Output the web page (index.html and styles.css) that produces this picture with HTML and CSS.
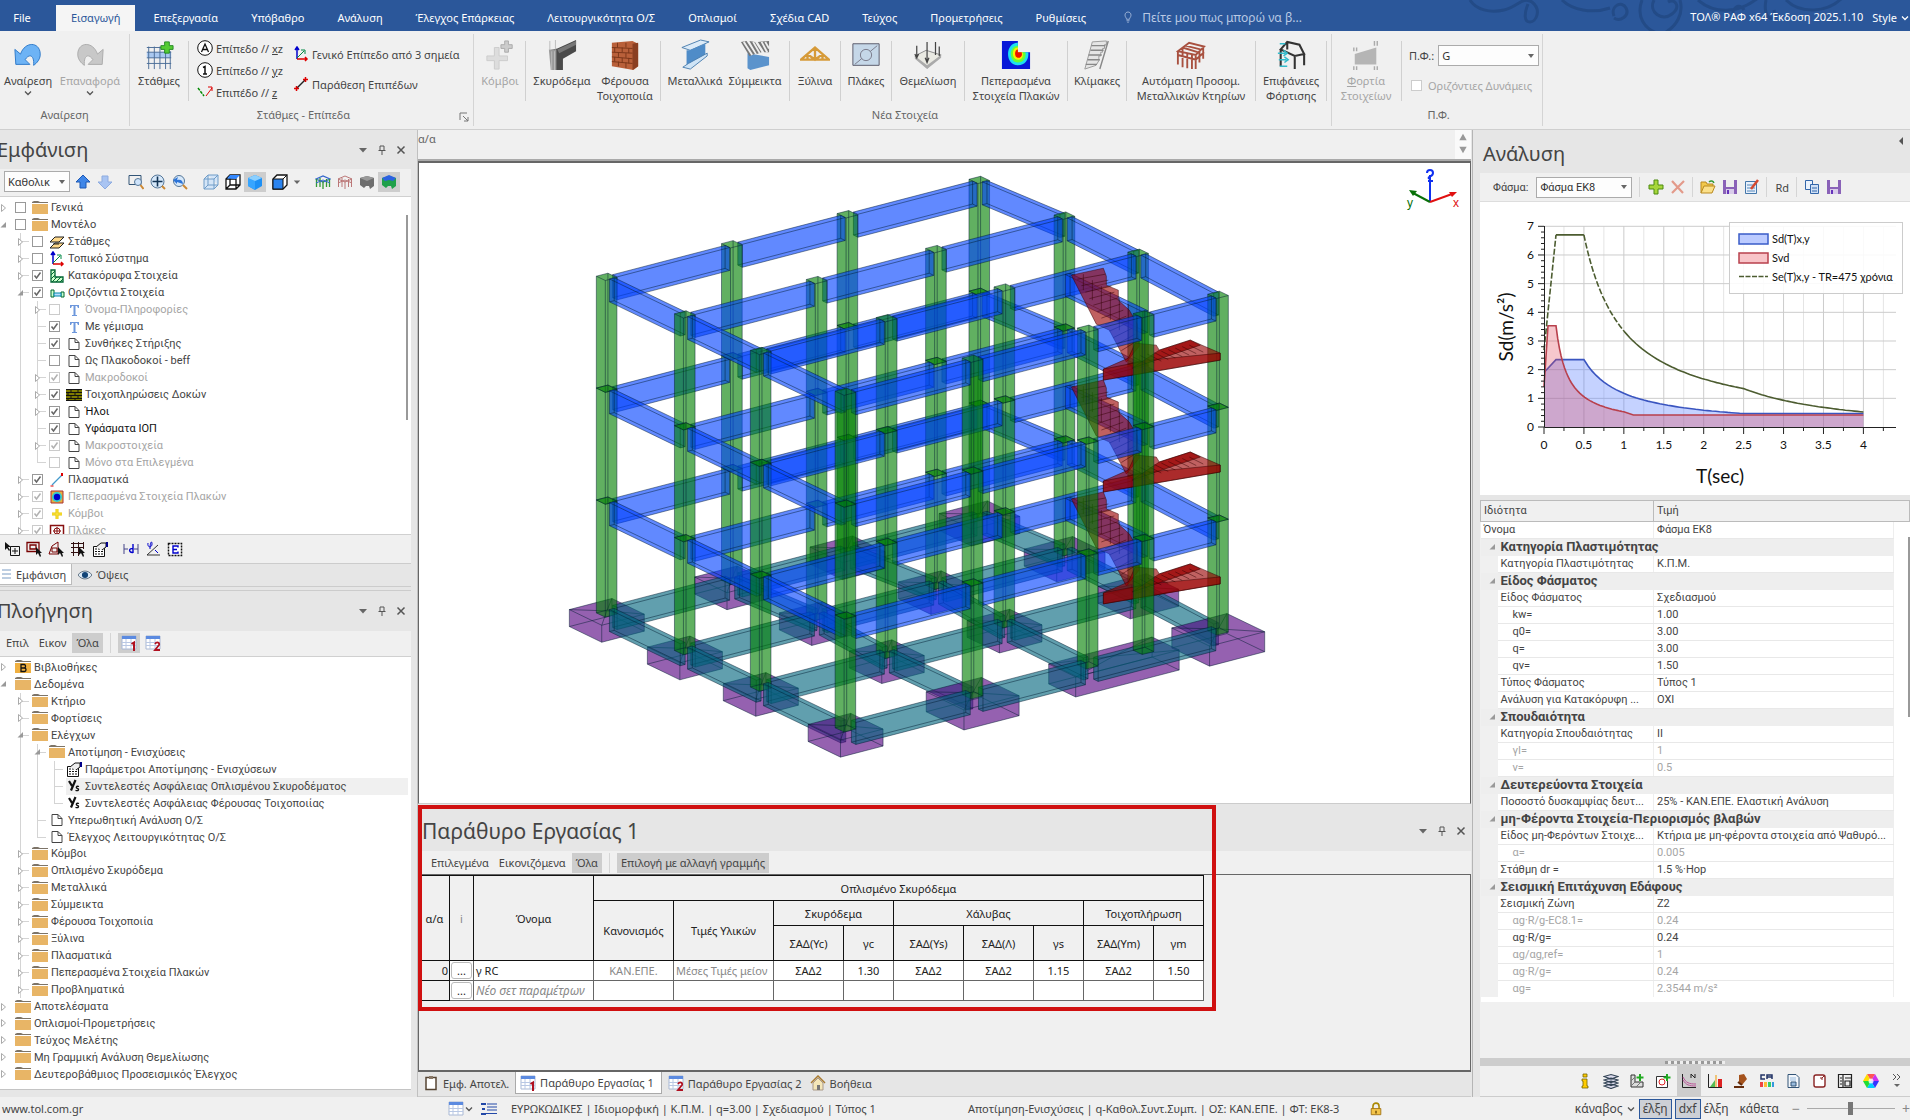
FILE: index.html
```html
<!DOCTYPE html>
<html lang="el">
<head>
<meta charset="utf-8">
<title>ΤΟΛ® ΡΑΦ</title>
<link rel="stylesheet" href="styles.css">
</head>
<body>
<svg class="defs" aria-hidden="true">
  <symbol id="folder" viewBox="0 0 16 16"><path d="M0 3V2l2-1h4l2 1h8v1z" fill="#7d7468"/><path d="M0 4h16v10H0z" fill="#e8b566"/></symbol>
  <symbol id="folderb" viewBox="0 0 16 16"><path d="M0 3V2l2-1h4l2 1h8v1z" fill="#7d7468"/><path d="M0 4h16v10H0z" fill="#f0b040"/><path d="M6 5.500v7h3.500c2 0 2-3.500 0-3.500H6h3.200c1.800 0 1.800-3.500 0-3.500z" fill="none" stroke="#111" stroke-width="1.300"/></symbol>
  <symbol id="doc" viewBox="0 0 16 16"><path d="M3 2.500h6l4 4v7H3zM9 2.500v4h4" fill="#fff" stroke="#444"/></symbol>
  <symbol id="levels" viewBox="0 0 16 16"><path d="M1 14l5-5h9l-5 5zM1 8l5-5h9l-5 5z" fill="#ffd98a" stroke="#222"/><path d="M4 10h6" stroke="#222"/></symbol>
  <symbol id="axes" viewBox="0 0 16 16"><path d="M4 13V2M2 4l2-3 2 3" stroke="#00c" fill="none" stroke-width="1.500"/><path d="M4 13h10M12 11l2 2-2 2" stroke="#d00" fill="none" stroke-width="1.500"/><path d="M4 12l7-7M8 4h4v4" stroke="#084" fill="none"/></symbol>
  <symbol id="lshape" viewBox="0 0 16 16"><path d="M2 2h4v7h8v5H2z" fill="#cfc" stroke="#063" stroke-width="1.300"/><path d="M2 7l4-4M2 11l4-4M3 14l5-5M7 14l5-5M11 14l3-3" stroke="#063"/></symbol>
  <symbol id="beam" viewBox="0 0 16 16"><path d="M2 5h3v7H2zM12 7h3v5h-3z" fill="#cfc" stroke="#063"/><path d="M5 8h7v3H5z" fill="#bdf" stroke="#08a"/></symbol>
  <symbol id="tt" viewBox="0 0 16 16"><path d="M4 3h9v3h-1l-1-2h-1.500v9H11v1H6v-1h1.500V4H6L5 6H4z" fill="#6d97dc"/></symbol>
  <symbol id="bricks" viewBox="0 0 16 16"><path d="M0 2h16v12H0z" fill="#7d7a00"/><path d="M0 2.500h16M0 5.500h16M0 8.500h16M0 11.500h16M0 13.500h16M5 2v3M12 2v3M2 5v3M9 5v3M5 8v3M12 8v3M2 11v3M9 11v3" stroke="#111"/></symbol>
  <symbol id="line" viewBox="0 0 16 16"><path d="M3 13L13 3" stroke="#49c" stroke-width="1.300"/><path d="M1.500 13.500h3v1h-3zM12 1h2v3h-2z" fill="#d00"/></symbol>
  <symbol id="fem" viewBox="0 0 16 16"><path d="M2 2h12v12H2z" fill="#e8b040" stroke="#a33"/><circle cx="8" cy="8" r="5" fill="#3cc"/><circle cx="8" cy="8" r="3.200" fill="#00c"/></symbol>
  <symbol id="node" viewBox="0 0 16 16"><path d="M8 3v10M3 8h10" stroke="#e8c800" stroke-width="3"/><path d="M8 3v10M3 8h10" stroke="#ffe650"/></symbol>
  <symbol id="slab" viewBox="0 0 16 16"><path d="M1.500 2.500h13v12h-13z" fill="#fff" stroke="#811" stroke-width="1.500"/><circle cx="8" cy="8" r="3" fill="none" stroke="#811"/><path d="M8 4v8M4 8h8" stroke="#811"/></symbol>
  <symbol id="params" viewBox="0 0 16 16"><path d="M1.500 5.500h11v10h-11z" fill="#fff" stroke="#111"/><path d="M3 8h8M3 10.500h8M3 13h8" stroke="#111" stroke-dasharray="2 1"/><path d="M4 6l5-4h5v4l-4 3" fill="#eee" stroke="#111"/><path d="M14 1h2v5h-2z" fill="#008"/></symbol>
  <symbol id="ys" viewBox="0 0 16 16"><path d="M3 3l3 5M9.500 2L5 12.500" stroke="#111" stroke-width="2.200" fill="none"/><path d="M13 8.500c-3-1-3.500 1.500-1.500 2s1 3-2 1.800" stroke="#111" stroke-width="1.300" fill="none"/></symbol>
  <symbol id="up" viewBox="0 0 16 16"><path d="M8 1l7 7h-4v6H5V8H1z" fill="#3f86e8" stroke="#1d58b5"/></symbol>
  <symbol id="down" viewBox="0 0 16 16"><path d="M8 15L1 8h4V2h6v6h4z" fill="#a9c4f2" stroke="#8dabe0"/></symbol>
  <symbol id="zwin" viewBox="0 0 16 16"><path d="M1 1.500h12v9H1z" fill="none" stroke="#357"/><circle cx="10" cy="8" r="3.500" fill="#cfe4fb" stroke="#579"/><path d="M12.500 11l3 4" stroke="#c83" stroke-width="2"/></symbol>
  <symbol id="zpan" viewBox="0 0 16 16"><circle cx="7.500" cy="7.500" r="6.500" fill="#d6e8fa" stroke="#579"/><path d="M7.500 2.500v10M2.500 7.500h10" stroke="#135" stroke-width="1.600"/><path d="M12 12l3 3" stroke="#c83" stroke-width="2"/></symbol>
  <symbol id="zprev" viewBox="0 0 16 16"><circle cx="7" cy="7" r="5.500" fill="#d6e8fa" stroke="#579"/><path d="M11 10c0-4-3-5-6-4l1-3-5 3 4 4v-2" fill="#2d74d8"/><path d="M11 11l4 4" stroke="#c83" stroke-width="2"/></symbol>
  <symbol id="cube1" viewBox="0 0 16 16"><path d="M1 5l4-4h10v10l-4 4H1zM1 5h10v10M11 5l4-4M5 1v10h10M1 15l4-4" fill="#d4e5f7" stroke="#6f9cc8"/></symbol>
  <symbol id="cube2" viewBox="0 0 16 16"><path d="M1 5l4-4h10v10l-4 4H1zM1 5h10v10M5 1v10h10M1 15l4-4" fill="#fff" stroke="#111" stroke-width="1.300"/><path d="M2 4.500L5 1h10l-4 4z" fill="#38f"/></symbol>
  <symbol id="cube3" viewBox="0 0 16 16"><path d="M1 4l7-3 7 3v8l-7 4-7-4z" fill="#1e90f5"/><path d="M1 4l7 3v9l-7-4z" fill="#37a5ff"/><path d="M1 4l7-3 7 3-7 3z" fill="#8cd0ff"/></symbol>
  <symbol id="cube4" viewBox="0 0 16 16"><path d="M1 5l4-4h10v10l-4 4H1z" fill="#fff" stroke="#111" stroke-width="1.300"/><path d="M1 5h10v10H1z" fill="#2b84f0" stroke="#111"/><path d="M11 5l4-4" stroke="#111"/></symbol>
  <symbol id="frame1" viewBox="0 0 16 16"><path d="M1 5l7-3 7 3-7 3z" fill="none" stroke="#36c" stroke-width="1.300"/><path d="M1.500 5v8M5 4v9M8 7v8M11.500 5v8M14.500 5v8" stroke="#393" stroke-width="1.300"/><path d="M1 9l7-3 7 3" fill="none" stroke="#36c"/></symbol>
  <symbol id="frame2" viewBox="0 0 16 16"><path d="M1 5l7-3 7 3-7 3zM1.500 5v8M5 4v9M8 7v8M11.500 5v8M14.500 5v8M1 9l7-3 7 3" fill="none" stroke="#b77"/></symbol>
  <symbol id="solid1" viewBox="0 0 16 16"><path d="M1 4l7-2 7 2v8l-4 3-1-3H7l-2 2-4-3z" fill="#6e6e6e"/><path d="M1 4l7 3 7-3-7-2z" fill="#999"/></symbol>
  <symbol id="solid2" viewBox="0 0 16 16"><path d="M1 4l7-2 7 2v8l-4 3-1-3H7l-2 2-4-3z" fill="#1fa04a"/><path d="M1 4l7-3 7 3-3 3-4-1-4 1z" fill="#2b62e0"/></symbol>
  <symbol id="sel1" viewBox="0 0 16 16"><path d="M1 1v8l2-2 2 3 1-1-2-3h3z" fill="#111"/><path d="M6.500 5.500h9v9h-9zM8 10h6M11 7v6" fill="none" stroke="#111"/></symbol>
  <symbol id="sel2" viewBox="0 0 16 16"><path d="M1 1.500h12v9H1zM4 4h6v4H4z" fill="none" stroke="#700" stroke-width="1.300"/><path d="M10 6v8l2-2 2 4 1-1-1-3h2z" fill="#111"/></symbol>
  <symbol id="sel3" viewBox="0 0 16 16"><path d="M1 13l3-8 6-4v12zM4 7h5v4H4z" fill="none" stroke="#700"/><path d="M10 6v8l2-2 2 4 1-1-1-3h2z" fill="#111"/></symbol>
  <symbol id="sel4" viewBox="0 0 16 16"><path d="M1 2.500h13M1 6.500h13M1 11.500h9M3.500 1v14M8.500 1v14M13.500 1v7" stroke="#311"/><path d="M9 6v8l2-2 2 4 1-1-1-3h2z" fill="#111"/></symbol>
  <symbol id="dim" viewBox="0 0 16 16"><path d="M1 3v10M15 3v10M1 8h4M11 8h4" stroke="#448"/><path d="M10 3v9M10 8c-4-2-5 4 0 3.500" fill="none" stroke="#00c" stroke-width="1.400"/></symbol>
  <symbol id="ang" viewBox="0 0 16 16"><path d="M2 14L13 4M2 14h13" stroke="#333"/><path d="M3 2c-1 5 4 5 4 1S5 1 5 8M10 9l3 3" stroke="#00c" fill="none"/></symbol>
  <symbol id="ebox" viewBox="0 0 16 16"><path d="M1.500 2.500h13v12h-13z" fill="#fff" stroke="#111" stroke-width="1.500" stroke-dasharray="2 1"/><path d="M11 6.500V5H6v7h5v-1.500M6 8.500h4" fill="none" stroke="#00c" stroke-width="1.400"/></symbol>
  <symbol id="eye" viewBox="0 0 16 16"><path d="M0 8c4-6 12-6 16 0-4 6-12 6-16 0z" fill="#dbe9f5" stroke="#567"/><circle cx="8" cy="8" r="3.500" fill="#147"/></symbol>
  <symbol id="list" viewBox="0 0 16 16"><path d="M1 3h3v2H1zM1 7h3v2H1zM1 11h3v2H1z" fill="#48c"/><path d="M6 4h9M6 8h9M6 12h9" stroke="#7a9cc4"/></symbol>
  <symbol id="grid" viewBox="0 0 16 16"><path d="M1 1h14v13H1z" fill="#fff" stroke="#a9b8d4"/><path d="M1 1h14v3H1z" fill="#5b8ae0"/><path d="M1 7.500h14M1 10.500h14M5 4v10M10 4v10" stroke="#b9c8e4"/></symbol>
  <symbol id="grid1" viewBox="0 0 16 16"><use href="#grid"/><path d="M10.500 9l2.500-1.500V16" stroke="#b01020" stroke-width="2" fill="none"/></symbol>
  <symbol id="grid2" viewBox="0 0 16 16"><use href="#grid"/><path d="M10 9c2-3 5-1 4 1l-4 5h5" stroke="#b01020" stroke-width="1.800" fill="none"/></symbol>
  <symbol id="clip" viewBox="0 0 16 16"><path d="M3 2.500h10v12H3z" fill="#fff" stroke="#543" stroke-width="1.500"/><path d="M6 1h4v3H6z" fill="#876"/></symbol>
  <symbol id="home" viewBox="0 0 16 16"><path d="M3 8v7h10V8L8 3z" fill="#f4e6b8" stroke="#a98"/><path d="M1 8l7-7 7 7" fill="none" stroke="#a87a30" stroke-width="1.500"/><path d="M7 10h3v5H7z" fill="#777"/></symbol>
  <symbol id="plus" viewBox="0 0 16 16"><path d="M6 1h4v5h5v4h-5v5H6v-5H1V6h5z" fill="#a6d63a" stroke="#4c8a10"/></symbol>
  <symbol id="cross" viewBox="0 0 16 16"><path d="M2 2l11 12M14 2L2 14" stroke="#e39a8a" stroke-width="2.200"/></symbol>
  <symbol id="open" viewBox="0 0 16 16"><path d="M1 14V3h5l1 2h6v3" fill="#f2c94c" stroke="#b98a20"/><path d="M1 14l3-7h11l-3 7z" fill="#fbe08a" stroke="#b98a20"/><path d="M9 3c2-2 4-1 5 1" stroke="#393" fill="none" stroke-width="1.500"/></symbol>
  <symbol id="save" viewBox="0 0 16 16"><path d="M1 1h14v14H1z" fill="#8a62b8"/><path d="M4 1h8v7H4z" fill="#eee"/><path d="M4 10h8v5H4z" fill="#d9cdea"/><path d="M5 11h2v4H5z" fill="#63b"/></symbol>
  <symbol id="edit" viewBox="0 0 16 16"><path d="M1.500 2.500h11v12h-11z" fill="#e7f0fb" stroke="#47a"/><path d="M3 6h6M3 9h8M3 12h8" stroke="#58b"/><path d="M7 10l7-9" stroke="#d54a30" stroke-width="2.500"/></symbol>
  <symbol id="copy" viewBox="0 0 16 16"><path d="M1.500 1.500h7v9h-7z" fill="#eaf2fc" stroke="#36a"/><path d="M6.500 5.500h8v9h-8z" fill="#cfe0f6" stroke="#36a"/><path d="M8 9h5M8 12h5" stroke="#36a"/></symbol>
  <symbol id="pin" viewBox="0 0 10 10"><path d="M3 1h4v4.500H3zM1.500 5.500h7M5 5.500V10" fill="none" stroke="#555"/></symbol>
  <symbol id="x" viewBox="0 0 10 10"><path d="M1.500 1.500l7 7M8.500 1.500l-7 7" stroke="#555" stroke-width="1.500"/></symbol>
  <symbol id="caret" viewBox="0 0 10 10"><path d="M1 3h8L5 7.500z" fill="#666"/></symbol>
  <symbol id="chev" viewBox="0 0 10 10"><path d="M2 3.500l3 3 3-3" fill="none" stroke="#555" stroke-width="1.300"/></symbol>
  <symbol id="closed" viewBox="0 0 8 10"><path d="M1.500 1.500l4 3.500-4 3.500z" fill="#fff" stroke="#aaa"/></symbol>
  <symbol id="opened" viewBox="0 0 8 10"><path d="M6 2v5.500H.5z" fill="#999"/></symbol>

  <symbol id="undo" viewBox="0 0 32 32"><path d="M2 10l1 16 15 0-5-5c4-7 10-5 9 6 0 0 8-5 7-13C28 2 13 1 8 15z" fill="#6db3f5" stroke="#2c77c8"/></symbol>
  <symbol id="redo" viewBox="0 0 32 32"><path d="M30 10l-1 16-15 0 5-5c-4-7-10-5-9 6 0 0-8-5-7-13C4 2 19 1 24 15z" fill="#c8c8c8" stroke="#aaa"/></symbol>
  <symbol id="stathmes" viewBox="0 0 32 32"><path d="M3 13h26v6H3z" fill="#a9c8f0"/><path d="M3 8h20M3 13h26M3 19h26M3 25h26M5 7v24M11 7v24M17 7v24M23 10v21M28 12v19" stroke="#4a6c96"/><path d="M22 2h5v4h4v4h-4v4h-5v-4h-4V6h4z" fill="#5c3" stroke="#282"/></symbol>
  <symbol id="kom" viewBox="0 0 32 32"><path d="M10 8h5v9h9v5h-9v9h-5v-9H2v-5h8z" fill="#ddd" stroke="#ccc"/><path d="M21 1h4v4h4v4h-4v4h-4V9h-4V5h4z" fill="#ccc" stroke="#aaa"/></symbol>
  <symbol id="conc" viewBox="0 0 32 32"><path d="M3 11l8-2L31 0v12L17 20v12H7V12z" fill="#4a4a4a"/><path d="M2 10h8v22H4z" fill="#999"/><path d="M11 10L31 1v4L13 14z" fill="#777"/><path d="M3 1v10M9 0v10M5 12v20M8 12v20" stroke="#bbb"/></symbol>
  <symbol id="wall" viewBox="0 0 32 32"><path d="M2 3l22-2 6 3v24l-5 4-23-4z" fill="#b9603a"/><path d="M24 4l6-1v25l-6 4z" fill="#8a3f22"/><path d="M2 8l22 1M2 13l22 1M2 18l22 2M2 23l22 2M8 3v5M17 3v5M5 8v5M13 8v5M20 9v5M9 13v5M17 14v5M5 18v5M13 19v5M20 19v6M9 23v5M17 24v6" stroke="#7a3519"/></symbol>
  <symbol id="ibeam" viewBox="0 0 32 32"><path d="M2 8L22 0l9 2-20 9z" fill="#dcebf8" stroke="#4b7eae"/><path d="M7 11l3 0L27 4v12L10 27H7z" fill="#4f8cc8"/><path d="M3 29l6-4 20-11v3L11 31z" fill="#cfe4f6" stroke="#4b7eae"/></symbol>
  <symbol id="comp" viewBox="0 0 32 32"><path d="M8 14l23 4v9l-20 5-3-2z" fill="#5b93cc"/><path d="M1 2l6-1 9 14-6 2zM10 1l6 1 7 11-5 2zM19 2l12-1v12l-5 0z" fill="#777"/><path d="M4 2l9 14M14 2l7 12M23 2l6 11M27 2l4 7" stroke="#eee" stroke-width="2"/></symbol>
  <symbol id="truss" viewBox="0 0 32 32"><path d="M1 21L16 8l15 13zM16 8v13M8 15l8 6 8-6M8 15v6M24 15v6" fill="none" stroke="#d69a38" stroke-width="2.500"/></symbol>
  <symbol id="plate" viewBox="0 0 32 32"><path d="M2 4h28v23H2z" fill="#c5d7e8" stroke="#556"/><path d="M4 26L28 6" stroke="#778"/><circle cx="16" cy="16" r="6" fill="#c5d7e8" stroke="#778"/></symbol>
  <symbol id="found" viewBox="0 0 32 32"><path d="M2 17l12-6 16 5-15 14z" fill="#e9e9e2" stroke="#888"/><path d="M2 17l13 10 15-11v3L15 31 2 20z" fill="#aaa"/><path d="M4 6v12M15 2v21M24 2v14M28 7v10M2 15l2 4 2-4M13 19l2 5 2-5" stroke="#444" fill="none" stroke-width="1.300"/></symbol>
  <symbol id="pep" viewBox="0 0 32 32"><path d="M1 1h17v12h13v18H1z" fill="#0818d8"/><path d="M18 3c-14 0-14 24 0 24 9 0 12-8 11-14H18z" fill="#1de0f0"/><path d="M18 6c-10 0-10 18 0 18 7 0 9-6 8-11h-8z" fill="#6f3"/><path d="M18 8c-7 0-7 13 0 13 5 0 6-4 5-8h-5z" fill="#fe0"/><path d="M18 10c-4 0-4 9 0 9s5-3 4-6h-4z" fill="#e10"/></symbol>
  <symbol id="stairs" viewBox="0 0 32 32"><path d="M11 2l15-1v4l-2 0v4l-2 0v4l-2 0v4l-2 0v5l-3 5-12 4z" fill="#e5e5e5" stroke="#999"/><path d="M10 6h15M9 11h14M7 16h14M6 21h13M4 26h12M28 1L19 31" stroke="#888" stroke-width="1.500"/></symbol>
  <symbol id="bldg" viewBox="0 0 32 32"><path d="M2 12L14 3l16 4-9 9zM2 12v14M7 9v20M12 13v17M17 15v16M21 16v15M25 12v12M29 7v13M2 16l19 5 9-8M7 8l16 5M10 6l16 4" fill="none" stroke="#a8503f" stroke-width="2"/></symbol>
  <symbol id="surf" viewBox="0 0 32 32"><path d="M5 10L12 2l13 3 5 10-10 2zM5 10v18M30 14v13M20 17v14M5 10l15 7M12 2v8" fill="none" stroke="#333" stroke-width="2.200"/><path d="M2 14h8M3 21h8M4 28h8M8 11l4 3-4 3M9 18l4 3-4 3M4 4h6" stroke="#3bc" stroke-width="1.600" fill="none"/></symbol>
  <symbol id="load" viewBox="0 0 32 32"><path d="M4 15l23-7v18H4z" fill="#b5b5b5"/><path d="M3 8v4M6 8v4M25 1v5M28 1v5M3 28v4M6 28v4M25 28v4M28 28v4" stroke="#aaa" stroke-width="1.500"/></symbol>
  <symbol id="ca" viewBox="0 0 16 16"><circle cx="8" cy="8" r="7.300" fill="#fff" stroke="#111"/><path d="M4.500 12L8 4l3.500 8M6 9.500h4" fill="none" stroke="#111" stroke-width="1.300"/></symbol>
  <symbol id="c1" viewBox="0 0 16 16"><circle cx="8" cy="8" r="7.300" fill="#fff" stroke="#111"/><path d="M6 5.500l2-1V12M6 12h4" fill="none" stroke="#111" stroke-width="1.500"/></symbol>
  <symbol id="cv" viewBox="0 0 16 16"><path d="M1 4l6 8" stroke="#080" stroke-dasharray="3 1" stroke-width="1.500"/><path d="M15 4l-6 8M11 3h4v4" stroke="#d00" fill="none"/></symbol>
  <symbol id="mult" viewBox="0 0 16 16"><path d="M4 12l8-8" stroke="#222" stroke-width="1.500"/><path d="M1 12.500h5M3.500 10v5M10 3.500h5M12.500 1v5" stroke="#d00" stroke-width="1.500"/></symbol>
  <symbol id="info" viewBox="0 0 16 16"><path d="M6 1h4v3H6zM5 6h5v7h1v2H5v-2h1V8H5z" fill="#fc0" stroke="#760" stroke-width=".8"/></symbol>
  <symbol id="stack" viewBox="0 0 16 16"><path d="M1 13l7 2.500 7-2.500-7-2zM1 10l7 2.500 7-2.500-7-2zM1 7l7 2.500L15 7 8 5zM1 3.500L8 6l7-2.500-7-2z" fill="#dde" stroke="#345" stroke-width="1.200"/></symbol>
  <symbol id="lplus" viewBox="0 0 16 16"><path d="M2 2h4v7h8v5H2z" fill="#ddd" stroke="#333"/><path d="M2 8l4-4M2 13l5-5M7 14l5-5" stroke="#777"/><path d="M11 1v7M7.500 4.500h7" stroke="#2a2" stroke-width="2"/></symbol>
  <symbol id="nplus" viewBox="0 0 16 16"><path d="M1.500 3.500h11v11h-11z" fill="#fff" stroke="#333"/><circle cx="7" cy="9" r="3" fill="none" stroke="#d22"/><path d="M12 1v7M8.500 4.500h7" stroke="#2a2" stroke-width="2"/></symbol>
  <symbol id="spec" viewBox="0 0 16 16"><path d="M1.500 1v13.500H15" fill="none" stroke="#222"/><path d="M2 4c3 6 6 7 13 7M2 7c3 5 6 6 13 6" fill="none" stroke="#b59"/><path d="M10 5V1l4 4V1" fill="none" stroke="#222"/></symbol>
  <symbol id="bars" viewBox="0 0 16 16"><path d="M1.500 1v13.500H15" fill="none" stroke="#222"/><path d="M3 14l5-7v7z" fill="#5b5"/><path d="M11 6h4v8h-4z" fill="#d22"/><path d="M9 2v12" stroke="#e90"/></symbol>
  <symbol id="hammer" viewBox="0 0 16 16"><path d="M6 2l5-1 3 5-5 6-3-1z" fill="#a5531d"/><path d="M1 13h10v2H1z" fill="#642c0c"/><path d="M5 9l4 3" stroke="#642c0c" stroke-width="2"/></symbol>
  <symbol id="cib" viewBox="0 0 16 16"><path d="M6 2H2v4h4M8 6V2h5v4M8 4h5" fill="none" stroke="#236" stroke-width="1.500"/><path d="M1 9h3v5H1z" fill="#e44"/><path d="M5 9h3v5H5z" fill="#fb3"/><path d="M9 9h3v5H9z" fill="#3c6"/><path d="M13 9h2v5h-2z" fill="#39d"/></symbol>
  <symbol id="rep" viewBox="0 0 16 16"><path d="M3 1.500h8l3 3v10H3z" fill="#f2f6fb" stroke="#357"/><path d="M5 5h6M5 7h6" stroke="#9bd"/><path d="M6 9h5v4H6z" fill="#9bd" stroke="#357"/></symbol>
  <symbol id="sect" viewBox="0 0 16 16"><rect x="3" y="2" width="11" height="12" rx="2" fill="#fff" stroke="#822" stroke-width="1.400"/><path d="M9 5h2v2M13 3l-2 2" stroke="#822" fill="none"/></symbol>
  <symbol id="tbl" viewBox="0 0 16 16"><path d="M1.500 1.500h13v13h-13zM6 2v12M8 8h5v5H8zM8 5h6M3 5h2M3 8h2M3 11h2" fill="none" stroke="#222" stroke-width="1.200"/></symbol>
  <symbol id="wheel" viewBox="0 0 16 16"><path d="M8 8L4 1h8z" fill="#f55"/><path d="M8 8l4-7 4 7z" fill="#c3e"/><path d="M8 8h8l-4 7z" fill="#33f"/><path d="M8 8l4 7H4z" fill="#0cf"/><path d="M8 8l-4 7-4-7z" fill="#2d3"/><path d="M8 8H0l4-7z" fill="#fd0"/><circle cx="8" cy="8" r="2.500" fill="#fff" opacity=".8"/></symbol>
  <symbol id="lock" viewBox="0 0 16 16"><path d="M4.500 8V5c0-5 7-5 7 0v3" fill="none" stroke="#a80" stroke-width="1.800"/><path d="M2.500 7.500h11v7h-11z" fill="#f3c44b" stroke="#a07010"/><path d="M8 10v3" stroke="#640" stroke-width="1.500"/></symbol>
  <symbol id="bulb" viewBox="0 0 16 16"><path d="M6 11c0-2-2-3-2-5.500C4 0 12 0 12 5.500 12 8 10 9 10 11zM6 13h4M7 15h2" fill="none" stroke="#b9c9e4"/></symbol>
</svg>

<header class="titlebar">
  <svg class="swirls" viewBox="0 0 400 31" preserveAspectRatio="xMaxYMin meet" fill="none" stroke="#234b87" stroke-width="3"><path d="M4 0c6 10 20 13 34 10s18-14 28-8c10 8 4 20-2 20s-6-8-2-18M96 0c10 10 30 14 48 8M148 16c-4-10 8-16 12-8s-6 14-12 10M176 0c-6 16 2 30 18 34M188 0c-6 12 8 22 18 14s2-16-4-12M214 0c4 14-4 26-14 32M232 0c16 14 40 14 60-2M268 18c-4-10 6-16 10-8M300 0c-4 20 10 24 8 10M320 0c14 14 42 14 58-4"/></svg>
  <nav class="tabs">
    <button class="tab t-file">File</button><button class="tab active">Εισαγωγή</button><button class="tab">Επεξεργασία</button><button class="tab">Υπόβαθρο</button><button class="tab">Ανάλυση</button><button class="tab">Έλεγχος Επάρκειας</button><button class="tab">Λειτουργικότητα Ο/Σ</button><button class="tab">Οπλισμοί</button><button class="tab">Σχέδια CAD</button><button class="tab">Τεύχος</button><button class="tab">Προμετρήσεις</button><button class="tab">Ρυθμίσεις</button>
  </nav>
  <svg class="i16 bulb"><use href="#bulb"/></svg><input class="tell" aria-label="Αναζήτηση" placeholder="Πείτε μου πως μπορώ να β...">
  <span class="app">ΤΟΛ® ΡΑΦ x64 Έκδοση 2025.1.10</span><button class="style">Style <svg class="i10"><use href="#chev"/></svg></button>
</header>

<section class="ribbon">
  <div class="group g1"><div class="items">
    <button class="big w56"><svg><use href="#undo"/></svg>Αναίρεση<svg class="i10"><use href="#chev"/></svg></button>
    <button class="big w68" disabled><svg><use href="#redo"/></svg>Επαναφορά<svg class="i10"><use href="#chev"/></svg></button>
  </div><h3>Αναίρεση</h3></div>
  <div class="group g2"><div class="items">
    <button class="big w50"><svg><use href="#stathmes"/></svg>Στάθμες</button><i class="sep"></i>
    <div class="smalls three"><button><svg class="i16"><use href="#ca"/></svg><span>Επίπεδο // <u>x</u>z</span></button><button><svg class="i16"><use href="#c1"/></svg><span>Επίπεδο // <u>y</u>z</span></button><button><svg class="i16"><use href="#cv"/></svg><span>Επιπέδο // <u>z</u></span></button></div>
    <div class="smalls two"><button><svg class="i16"><use href="#axes"/></svg>Γενικό Επίπεδο από 3 σημεία</button><button><svg class="i16"><use href="#mult"/></svg>Παράθεση Επιπέδων</button></div>
  </div><h3>Στάθμες - Επίπεδα</h3><button class="launch" aria-label="Περισσότερα"><svg class="i10"><path d="M1 8V1h7M4 4l5 5M9 5v4H5" fill="none" stroke="#777"/></svg></button></div>
  <div class="group g3"><div class="items">
    <button class="big w42" disabled><svg><use href="#kom"/></svg>Κόμβοι</button><i class="sep"></i>
    <button class="big w64"><svg><use href="#conc"/></svg>Σκυρόδεμα</button>
    <button class="big w62"><svg><use href="#wall"/></svg>Φέρουσα<br>Τοιχοποιία</button><i class="sep"></i>
    <button class="big w60"><svg><use href="#ibeam"/></svg>Μεταλλικά</button>
    <button class="big w60"><svg><use href="#comp"/></svg>Σύμμεικτα</button><i class="sep"></i>
    <button class="big w42"><svg><use href="#truss"/></svg>Ξύλινα</button><i class="sep"></i>
    <button class="big w42"><svg><use href="#plate"/></svg>Πλάκες</button><i class="sep"></i>
    <button class="big w64"><svg><use href="#found"/></svg>Θεμελίωση</button><i class="sep"></i>
    <button class="big w94"><svg><use href="#pep"/></svg>Πεπερασμένα<br>Στοιχεία Πλακών</button><i class="sep"></i>
    <button class="big w50"><svg><use href="#stairs"/></svg>Κλίμακες</button><i class="sep"></i>
    <button class="big w120"><svg><use href="#bldg"/></svg>Αυτόματη Προσομ.<br>Μεταλλικών Κτηρίων</button><i class="sep"></i>
    <button class="big w62"><svg><use href="#surf"/></svg>Επιφάνειες<br>Φόρτισης</button><i class="sep"></i>
  </div><h3>Νέα Στοιχεία</h3></div>
  <div class="group g4"><div class="items">
    <button class="big w62" disabled><svg><use href="#load"/></svg><span><u>Φ</u>ορτία</span>Στοιχείων</button><i class="sep"></i>
    <div class="loads"><label>Π.Φ.: <select><option>G</option></select></label><label class="off"><input type="checkbox" disabled>Οριζόντιες Δυνάμεις</label></div>
  </div><h3>Π.Φ.</h3></div>
</section>

<main>
  <aside class="left">
    <section class="pane">
      <header class="phead"><h2>Εμφάνιση</h2><span class="wc"><button aria-label="Μενού"><svg class="i10"><use href="#caret"/></svg></button><button aria-label="Καρφίτσωμα"><svg class="i10"><use href="#pin"/></svg></button><button aria-label="Κλείσιμο"><svg class="i10"><use href="#x"/></svg></button></span></header>
      <div class="tools view-tools"><select class="sel-view" aria-label="Προβολή"><option>Καθολικ</option></select>
        <button><svg class="i16"><use href="#up"/></svg></button><button><svg class="i16"><use href="#down"/></svg></button>
        <button class="gap"><svg class="i16"><use href="#zwin"/></svg></button><button><svg class="i16"><use href="#zpan"/></svg></button><button><svg class="i16"><use href="#zprev"/></svg></button>
        <button class="gap"><svg class="i16"><use href="#cube1"/></svg></button><button><svg class="i16"><use href="#cube2"/></svg></button><button class="on"><svg class="i16"><use href="#cube3"/></svg></button><button class="next"><svg class="i16"><use href="#cube4"/></svg></button><button class="thin"><svg class="i8"><use href="#caret"/></svg></button>
        <button class="gap"><svg class="i16"><use href="#frame1"/></svg></button><button><svg class="i16"><use href="#frame2"/></svg></button><button><svg class="i16"><use href="#solid1"/></svg></button><button class="on"><svg class="i16"><use href="#solid2"/></svg></button></div>
      <ul class="tree tree-view">
        <li class="d0"><button class="tw"><svg><use href="#closed"/></svg></button><label><input type="checkbox"><svg class="i16"><use href="#folder"/></svg>Γενικά</label></li>
        <li class="d0"><button class="tw"><svg><use href="#opened"/></svg></button><label><input type="checkbox"><svg class="i16"><use href="#folder"/></svg>Μοντέλο</label></li>
        <li class="d1"><button class="tw"><svg><use href="#closed"/></svg></button><label><input type="checkbox"><svg class="i16"><use href="#levels"/></svg>Στάθμες</label></li>
        <li class="d1"><button class="tw"><svg><use href="#closed"/></svg></button><label><input type="checkbox"><svg class="i16"><use href="#axes"/></svg>Τοπικό Σύστημα</label></li>
        <li class="d1"><button class="tw"><svg><use href="#closed"/></svg></button><label><input type="checkbox" checked><svg class="i16"><use href="#lshape"/></svg>Κατακόρυφα Στοιχεία</label></li>
        <li class="d1"><button class="tw"><svg><use href="#opened"/></svg></button><label><input type="checkbox" checked><svg class="i16"><use href="#beam"/></svg>Οριζόντια Στοιχεία</label></li>
        <li class="d2 off"><button class="tw"><svg><use href="#closed"/></svg></button><label><input type="checkbox"><svg class="i16"><use href="#tt"/></svg>Όνομα-Πληροφορίες</label></li>
        <li class="d2"><i class="tw"></i><label><input type="checkbox" checked><svg class="i16"><use href="#tt"/></svg>Με γέμισμα</label></li>
        <li class="d2"><i class="tw"></i><label><input type="checkbox" checked><svg class="i16"><use href="#doc"/></svg>Συνθήκες Στήριξης</label></li>
        <li class="d2"><i class="tw"></i><label><input type="checkbox"><svg class="i16"><use href="#doc"/></svg>Ως Πλακοδοκοί - beff</label></li>
        <li class="d2 off"><button class="tw"><svg><use href="#closed"/></svg></button><label><input type="checkbox" checked><svg class="i16"><use href="#doc"/></svg>Μακροδοκοί</label></li>
        <li class="d2"><button class="tw"><svg><use href="#closed"/></svg></button><label><input type="checkbox" checked><svg class="i16"><use href="#bricks"/></svg>Τοιχοπληρώσεις Δοκών</label></li>
        <li class="d2 dark"><button class="tw"><svg><use href="#closed"/></svg></button><label><input type="checkbox" checked><svg class="i16"><use href="#doc"/></svg>Ήλοι</label></li>
        <li class="d2 dark"><i class="tw"></i><label><input type="checkbox" checked><svg class="i16"><use href="#doc"/></svg>Υφάσματα ΙΟΠ</label></li>
        <li class="d2 off"><button class="tw"><svg><use href="#closed"/></svg></button><label><input type="checkbox" checked><svg class="i16"><use href="#doc"/></svg>Μακροστοιχεία</label></li>
        <li class="d2 off end"><i class="tw"></i><label><input type="checkbox"><svg class="i16"><use href="#doc"/></svg>Μόνο στα Επιλεγμένα</label></li>
        <li class="d1"><button class="tw"><svg><use href="#closed"/></svg></button><label><input type="checkbox" checked><svg class="i16"><use href="#line"/></svg>Πλασματικά</label></li>
        <li class="d1 off"><button class="tw"><svg><use href="#closed"/></svg></button><label><input type="checkbox" checked><svg class="i16"><use href="#fem"/></svg>Πεπερασμένα Στοιχεία Πλακών</label></li>
        <li class="d1 off"><button class="tw"><svg><use href="#closed"/></svg></button><label><input type="checkbox" checked><svg class="i16"><use href="#node"/></svg>Κόμβοι</label></li>
        <li class="d1 off"><button class="tw"><svg><use href="#closed"/></svg></button><label><input type="checkbox" checked><svg class="i16"><use href="#slab"/></svg>Πλάκες</label></li>
      </ul>
      <div class="tools sel-tools"><button><svg class="i16"><use href="#sel1"/></svg></button><button><svg class="i16"><use href="#sel2"/></svg></button><button><svg class="i16"><use href="#sel3"/></svg></button><button><svg class="i16"><use href="#sel4"/></svg></button><button><svg class="i16"><use href="#params"/></svg></button><button class="gap"><svg class="i16"><use href="#dim"/></svg></button><button><svg class="i16"><use href="#ang"/></svg></button><button><svg class="i16"><use href="#ebox"/></svg></button></div>
      <div class="ptabs"><button class="active"><svg class="i16 cut"><use href="#list"/></svg>Εμφάνιση</button><button><svg class="i14"><use href="#eye"/></svg>Όψεις</button></div>
    </section>
    <section class="pane nav-pane">
      <header class="phead"><h2>Πλοήγηση</h2><span class="wc"><button aria-label="Μενού"><svg class="i10"><use href="#caret"/></svg></button><button aria-label="Καρφίτσωμα"><svg class="i10"><use href="#pin"/></svg></button><button aria-label="Κλείσιμο"><svg class="i10"><use href="#x"/></svg></button></span></header>
      <div class="tools nav-tools"><button class="txt">Επιλ</button><button class="txt">Εικον</button><button class="txt on">Όλα</button><i class="vsep"></i><button class="on"><svg class="i16"><use href="#grid1"/></svg></button><button><svg class="i16"><use href="#grid2"/></svg></button></div>
      <ul class="tree tree-nav">
        <li class="d0"><button class="tw"><svg><use href="#closed"/></svg></button><span><svg class="i16"><use href="#folderb"/></svg>Βιβλιοθήκες</span></li>
        <li class="d0"><button class="tw"><svg><use href="#opened"/></svg></button><span><svg class="i16"><use href="#folder"/></svg>Δεδομένα</span></li>
        <li class="d1"><button class="tw"><svg><use href="#closed"/></svg></button><span><svg class="i16"><use href="#folder"/></svg>Κτήριο</span></li>
        <li class="d1"><button class="tw"><svg><use href="#closed"/></svg></button><span><svg class="i16"><use href="#folder"/></svg>Φορτίσεις</span></li>
        <li class="d1"><button class="tw"><svg><use href="#opened"/></svg></button><span><svg class="i16"><use href="#folder"/></svg>Ελέγχων</span></li>
        <li class="d2"><button class="tw"><svg><use href="#opened"/></svg></button><span><svg class="i16"><use href="#folder"/></svg>Αποτίμηση - Ενισχύσεις</span></li>
        <li class="d3"><i class="tw"></i><span><svg class="i16"><use href="#params"/></svg>Παράμετροι Αποτίμησης - Ενισχύσεων</span></li>
        <li class="d3"><i class="tw"></i><span class="hit"><svg class="i16"><use href="#ys"/></svg>Συντελεστές Ασφάλειας Οπλισμένου Σκυροδέματος</span></li>
        <li class="d3 end"><i class="tw"></i><span><svg class="i16"><use href="#ys"/></svg>Συντελεστές Ασφάλειας Φέρουσας Τοιχοποιίας</span></li>
        <li class="d2"><i class="tw"></i><span><svg class="i16"><use href="#doc"/></svg>Υπερωθητική Ανάλυση Ο/Σ</span></li>
        <li class="d2 end"><i class="tw"></i><span><svg class="i16"><use href="#doc"/></svg>Έλεγχος Λειτουργικότητας Ο/Σ</span></li>
        <li class="d1"><button class="tw"><svg><use href="#closed"/></svg></button><span><svg class="i16"><use href="#folder"/></svg>Κόμβοι</span></li>
        <li class="d1"><button class="tw"><svg><use href="#closed"/></svg></button><span><svg class="i16"><use href="#folder"/></svg>Οπλισμένο Σκυρόδεμα</span></li>
        <li class="d1"><button class="tw"><svg><use href="#closed"/></svg></button><span><svg class="i16"><use href="#folder"/></svg>Μεταλλικά</span></li>
        <li class="d1"><button class="tw"><svg><use href="#closed"/></svg></button><span><svg class="i16"><use href="#folder"/></svg>Σύμμεικτα</span></li>
        <li class="d1"><button class="tw"><svg><use href="#closed"/></svg></button><span><svg class="i16"><use href="#folder"/></svg>Φέρουσα Τοιχοποιία</span></li>
        <li class="d1"><button class="tw"><svg><use href="#closed"/></svg></button><span><svg class="i16"><use href="#folder"/></svg>Ξύλινα</span></li>
        <li class="d1"><button class="tw"><svg><use href="#closed"/></svg></button><span><svg class="i16"><use href="#folder"/></svg>Πλασματικά</span></li>
        <li class="d1"><button class="tw"><svg><use href="#closed"/></svg></button><span><svg class="i16"><use href="#folder"/></svg>Πεπερασμένα Στοιχεία Πλακών</span></li>
        <li class="d1"><button class="tw"><svg><use href="#closed"/></svg></button><span><svg class="i16"><use href="#folder"/></svg>Προβληματικά</span></li>
        <li class="d0"><button class="tw"><svg><use href="#closed"/></svg></button><span><svg class="i16"><use href="#folder"/></svg>Αποτελέσματα</span></li>
        <li class="d0"><button class="tw"><svg><use href="#closed"/></svg></button><span><svg class="i16"><use href="#folder"/></svg>Οπλισμοί-Προμετρήσεις</span></li>
        <li class="d0"><button class="tw"><svg><use href="#closed"/></svg></button><span><svg class="i16"><use href="#folder"/></svg>Τεύχος Μελέτης</span></li>
        <li class="d0"><button class="tw"><svg><use href="#closed"/></svg></button><span><svg class="i16"><use href="#folder"/></svg>Μη Γραμμική Ανάλυση Θεμελίωσης</span></li>
        <li class="d0"><button class="tw"><svg><use href="#closed"/></svg></button><span><svg class="i16"><use href="#folder"/></svg>Δευτεροβάθμιος Προσεισμικός Έλεγχος</span></li>
      </ul>
    </section>
  </aside>

  <section class="center">
    <div class="strip">α/α<span class="spin"><svg viewBox="0 0 10 26"><path d="M1 9l4-7 4 7zM1 16l4 7 4-7z" fill="#999"/></svg></span></div>
    <div class="viewport">
      <svg id="model" viewBox="419 163 1052 640"></svg>
      <svg class="gizmo" viewBox="0 0 60 44"><path d="M26 34V8" stroke="#1030f0" stroke-width="2"/><path d="M23 6c0-4 6-4 6 0s-6 3-4 6M24 14h5" stroke="#1030f0" stroke-width="2" fill="none"/><path d="M26 35L9 26" stroke="#087008" stroke-width="2"/><path d="M5 23l8 1-4 5z" fill="#087008"/><path d="M26 35l22-8" stroke="#e01010" stroke-width="2"/><path d="M53 25l-8 0 3 5z" fill="#e01010"/><text x="3" y="40" fill="#087008">y</text><text x="49" y="40" fill="#e01010">x</text></svg>
    </div>
    <section class="work">
      <header class="phead"><h2>Παράθυρο Εργασίας 1</h2><span class="wc"><button aria-label="Μενού"><svg class="i10"><use href="#caret"/></svg></button><button aria-label="Καρφίτσωμα"><svg class="i10"><use href="#pin"/></svg></button><button aria-label="Κλείσιμο"><svg class="i10"><use href="#x"/></svg></button></span></header>
      <div class="tools work-tools"><button class="txt">Επιλεγμένα</button><button class="txt">Εικονιζόμενα</button><button class="txt on">Όλα</button><i class="vsep"></i><button class="txt on">Επιλογή με αλλαγή γραμμής</button></div>
      <div class="sheet">
        <table>
          <colgroup><col class="c30"><col class="c24"><col class="c120"><col class="c80"><col class="c100"><col class="c70"><col class="c50"><col class="c70"><col class="c70"><col class="c50"><col class="c70"><col class="c50"></colgroup>
          <thead>
            <tr class="h1"><th rowspan="3">α/α</th><th rowspan="3" class="dim">i</th><th rowspan="3">Όνομα</th><th colspan="9">Οπλισμένο Σκυρόδεμα</th></tr>
            <tr class="h1"><th rowspan="2">Κανονισμός</th><th rowspan="2">Τιμές Υλικών</th><th colspan="2">Σκυρόδεμα</th><th colspan="3">Χάλυβας</th><th colspan="2">Τοιχοπλήρωση</th></tr>
            <tr class="h3"><th>ΣΑΔ(Yc)</th><th>γc</th><th>ΣΑΔ(Ys)</th><th>ΣΑΔ(Λ)</th><th>γs</th><th>ΣΑΔ(Ym)</th><th>γm</th></tr>
          </thead>
          <tbody>
            <tr><th class="num">0</th><td><button>...</button></td><td class="l">γ RC</td><td class="dim">ΚΑΝ.ΕΠΕ.</td><td class="dim l">Μέσες Τιμές μείον</td><td>ΣΑΔ2</td><td>1.30</td><td>ΣΑΔ2</td><td>ΣΑΔ2</td><td>1.15</td><td>ΣΑΔ2</td><td>1.50</td></tr>
            <tr><th></th><td><button>...</button></td><td class="l new">Νέο σετ παραμέτρων</td><td></td><td></td><td></td><td></td><td></td><td></td><td></td><td></td><td></td></tr>
          </tbody>
        </table>
      </div>
      <div class="mark"></div>
    </section>
    <div class="wtabs"><button><svg class="i16"><use href="#clip"/></svg>Εμφ. Αποτελ.</button><button class="active"><svg class="i16"><use href="#grid1"/></svg>Παράθυρο Εργασίας 1</button><button><svg class="i16"><use href="#grid2"/></svg>Παράθυρο Εργασίας 2</button><button><svg class="i16"><use href="#home"/></svg>Βοήθεια</button></div>
  </section>

  <aside class="right">
    <header class="phead"><h2>Ανάλυση</h2><svg class="i10 fold"><path d="M7 1v8L3 5z" fill="#555"/></svg></header>
    <div class="tools an-tools"><label>Φάσμα: <select><option>Φάσμα ΕΚ8</option></select></label><i class="vsep"></i><button><svg class="i16"><use href="#plus"/></svg></button><button><svg class="i16"><use href="#cross"/></svg></button><i class="vsep tight"></i><button><svg class="i16"><use href="#open"/></svg></button><button><svg class="i16"><use href="#save"/></svg></button><button><svg class="i16"><use href="#edit"/></svg></button><i class="vsep tight"></i><button class="txt">Rd</button><i class="vsep tight"></i><button><svg class="i16"><use href="#copy"/></svg></button><button><svg class="i16"><use href="#save"/></svg></button></div>
    <div class="chart"><svg id="chart" viewBox="1480 203 430 293"></svg></div>
    <div class="props"><table>
      <colgroup><col class="c17"><col class="c156"><col><col class="c16"></colgroup>
      <thead><tr><th colspan="2">Ιδιότητα</th><th colspan="2">Τιμή</th></tr></thead>
      <tbody>
        <tr><td colspan="2" class="first">Όνομα</td><td>Φάσμα ΕΚ8</td><td></td></tr>
        <tr class="cat"><td><svg><use href="#opened"/></svg></td><th colspan="2">Κατηγορία Πλαστιμότητας</th><td></td></tr>
        <tr><td></td><td>Κατηγορία Πλαστιμότητας</td><td>Κ.Π.Μ.</td><td></td></tr>
        <tr class="cat"><td><svg><use href="#opened"/></svg></td><th colspan="2">Είδος Φάσματος</th><td></td></tr>
        <tr><td></td><td>Είδος Φάσματος</td><td>Σχεδιασμού</td><td></td></tr>
        <tr class="sub"><td></td><td>kw=</td><td>1.00</td><td></td></tr>
        <tr class="sub"><td></td><td>q0=</td><td>3.00</td><td></td></tr>
        <tr class="sub"><td></td><td>q=</td><td>3.00</td><td></td></tr>
        <tr class="sub"><td></td><td>qv=</td><td>1.50</td><td></td></tr>
        <tr><td></td><td>Τύπος Φάσματος</td><td>Τύπος 1</td><td></td></tr>
        <tr><td></td><td>Ανάλυση για Κατακόρυφη ...</td><td>ΟΧΙ</td><td></td></tr>
        <tr class="cat"><td><svg><use href="#opened"/></svg></td><th colspan="2">Σπουδαιότητα</th><td></td></tr>
        <tr><td></td><td>Κατηγορία Σπουδαιότητας</td><td>ΙΙ</td><td></td></tr>
        <tr class="sub off"><td></td><td>γΙ=</td><td>1</td><td></td></tr>
        <tr class="sub off"><td></td><td>ν=</td><td>0.5</td><td></td></tr>
        <tr class="cat"><td><svg><use href="#opened"/></svg></td><th colspan="2">Δευτερεύοντα Στοιχεία</th><td></td></tr>
        <tr><td></td><td>Ποσοστό δυσκαμψίας δευτ...</td><td>25% - ΚΑΝ.ΕΠΕ. Ελαστική Ανάλυση</td><td></td></tr>
        <tr class="cat"><td><svg><use href="#opened"/></svg></td><th colspan="2">μη-Φέροντα Στοιχεία-Περιορισμός βλαβών</th><td></td></tr>
        <tr><td></td><td>Είδος μη-Φερόντων Στοιχε...</td><td>Κτήρια με μη-φέροντα στοιχεία από Ψαθυρό...</td><td></td></tr>
        <tr class="sub off"><td></td><td>α=</td><td>0.005</td><td></td></tr>
        <tr><td></td><td>Στάθμη dr =</td><td>1.5 %·Hop</td><td></td></tr>
        <tr class="cat"><td><svg><use href="#opened"/></svg></td><th colspan="2">Σεισμική Επιτάχυνση Εδάφους</th><td></td></tr>
        <tr><td></td><td>Σεισμική Ζώνη</td><td>Ζ2</td><td></td></tr>
        <tr class="sub off"><td></td><td>αg·R/g-EC8.1=</td><td>0.24</td><td></td></tr>
        <tr class="sub"><td></td><td>αg·R/g=</td><td>0.24</td><td></td></tr>
        <tr class="sub off"><td></td><td>αg/αg,ref=</td><td>1</td><td></td></tr>
        <tr class="sub off"><td></td><td>αg·R/g=</td><td>0.24</td><td></td></tr>
        <tr class="sub off"><td></td><td>αg=</td><td>2.3544 m/s²</td><td></td></tr>
      </tbody></table></div>
    <div class="grip"></div>
    <div class="dock"><button><svg class="i16"><use href="#info"/></svg></button><button><svg class="i16"><use href="#stack"/></svg></button><button><svg class="i16"><use href="#lplus"/></svg></button><button><svg class="i16"><use href="#nplus"/></svg></button><button class="on"><svg class="i16"><use href="#spec"/></svg></button><button><svg class="i16"><use href="#bars"/></svg></button><button><svg class="i16"><use href="#hammer"/></svg></button><button><svg class="i16"><use href="#cib"/></svg></button><button><svg class="i16"><use href="#rep"/></svg></button><button><svg class="i16"><use href="#sect"/></svg></button><button><svg class="i16"><use href="#tbl"/></svg></button><button><svg class="i16"><use href="#wheel"/></svg></button><button><svg class="i16"><path d="M4 1l3 3-3 3M8 1l3 3-3 3" fill="none" stroke="#555"/><path d="M5 11h6l-3 3z" fill="#666"/></svg></button></div>
  </aside>
</main>

<footer>
  <a href="#">www.tol.com.gr</a>
  <div class="st-mid"><svg class="i16"><use href="#grid"/></svg><svg class="i10"><use href="#chev"/></svg><svg class="i16 st-list" viewBox="0 0 16 16"><path d="M0 2h5v2H0zM1 7h3v2H1zM0 12h5v2H0z" fill="#2348a8"/><path d="M6 3h10M6 6h10M6 9h10M1 12.500h15" stroke="#2348a8"/></svg><span class="st-a">ΕΥΡΩΚΩΔΙΚΕΣ | Ιδιομορφική | Κ.Π.Μ. | q=3.00 | Σχεδιασμού | Τύπος 1</span><span>Αποτίμηση-Ενισχύσεις | q-Καθολ.Συντ.Συμπ. | ΟΣ: ΚΑΝ.ΕΠΕ. | ΦΤ: ΕΚ8-3</span><svg class="i14 st-lock"><use href="#lock"/></svg></div>
  <div class="st-right"><button>κάναβος</button><svg class="i10"><use href="#chev"/></svg><button class="on">έλξη</button><button class="on">dxf</button><button>έλξη</button><button class="perp">κάθετα</button><span class="pm">−</span><input type="range" aria-label="Ζουμ" value="50"><span class="pm">+</span></div>
</footer>
<script src="app.js"></script>
</body>
</html>
```
FILE: styles.css
```css
* { box-sizing: border-box; }
body { margin: 0; height: 100vh; min-height: 1000px; display: flex; flex-direction: column; font: 12px/15px "Noto Sans", "Open Sans", sans-serif; color: #444; background: #f0f0f0; overflow: hidden; }
button { font: inherit; color: inherit; background: none; border: 0; padding: 0; margin: 0; white-space: nowrap; }
svg { display: block; flex: none; }
.defs { position: absolute; width: 0; height: 0; }
.i16 { width: 16px; height: 16px; }
.i14 { width: 14px; height: 14px; }
.i10 { width: 10px; height: 10px; }
.i8 { width: 8px; height: 8px; }
h2, h3, ul { margin: 0; padding: 0; font-weight: 400; list-style: none; }
select { appearance: none; font: inherit; color: #333; border: 1px solid #ababab; border-radius: 0; background: #fdfdfd url("data:image/svg+xml,%3Csvg xmlns='http://www.w3.org/2000/svg' width='8' height='8'%3E%3Cpath d='M1 2h6L4 6z' fill='%23666'/%3E%3C/svg%3E") no-repeat right 3px center; padding: 0 12px 0 3px; }

/* title bar */
.titlebar { position: relative; height: 31px; flex: none; display: flex; align-items: flex-end; background: #2b579a; color: #fff; }
.swirls { position: absolute; right: 44px; top: 0; width: 400px; height: 31px; }
.tabs { display: flex; }
.tab { height: 26px; padding: 0 15px 2px; margin-right: 3px; font-size: 11px; }
.tab.t-file { width: 56px; padding: 0 16px 2px 4px; margin-right: 0; }
.tab.active { background: #f5f5f5; color: #2b579a; }
.bulb { margin: 0 8px 6px 18px; width: 12px; height: 16px; }
.tell { font: inherit; font-size: 12px; color: #b9c9e4; background: none; border: 0; width: 200px; height: 26px; padding: 0 0 2px; }
.tell::placeholder { color: #b9c9e4; opacity: 1; }
.app { position: relative; margin-left: auto; line-height: 26px; font-size: 11px; padding-bottom: 1px; }
.style { position: relative; height: 26px; display: flex; align-items: center; gap: 3px; margin-left: 9px; padding-bottom: 1px; font-size: 11px; }
.style .i10 { filter: brightness(3); }

/* ribbon */
.ribbon { height: 99px; flex: none; display: flex; border-bottom: 1px solid #cfcfcf; background: #f0f0f0; }
.group { position: relative; display: flex; flex-direction: column; border-right: 1px solid #d4d4d4; margin: 3px 0; }
.g1 { width: 130px; }
.g2 { width: 344px; padding-left: 4px; }
.g3 { padding-left: 5px; }
.g4 { padding-left: 3px; width: 211px; }
.items { display: flex; flex: 1; align-items: stretch; }
.group h3 { font-size: 11px; line-height: 18px; text-align: center; color: #666; padding-bottom: 2px; }
.big { display: flex; flex-direction: column; align-items: center; font-size: 11px; line-height: 15px; padding-top: 5px; flex: none; }
.big > svg:first-child { width: 30px; height: 32px; margin-bottom: 2px; }
.big:disabled, .off { color: #a5a5a5; }
.w42 { width: 42px; } .w50 { width: 50px; } .w56 { width: 56px; } .w60 { width: 60px; } .w62 { width: 62px; } .w64 { width: 64px; } .w68 { width: 68px; } .w94 { width: 94px; } .w120 { width: 120px; }
.sep { width: 1px; margin: 7px 4px 5px; background: #d0d0d0; flex: none; }
.smalls { display: flex; flex-direction: column; font-size: 11px; }
.smalls button { display: flex; align-items: center; gap: 3px; white-space: pre; }
.three { padding: 6px 0 0 4px; gap: 6px; width: 100px; }
.two { padding: 12px 0 0; gap: 14px; }
.launch { position: absolute; right: 4px; bottom: 4px; }
.loads { display: flex; flex-direction: column; padding: 11px 0 0 3px; gap: 12px; font-size: 11px; }
.loads label { display: flex; align-items: center; gap: 4px; white-space: nowrap; }
.loads select { width: 101px; height: 21px; }
.loads input { appearance: none; margin: 0 2px; width: 11px; height: 11px; border: 1px solid #ccc; background: #fff; }

/* panes */
main { flex: 1; display: flex; min-height: 0; background: #e6e6e6; }
.left { width: 418px; flex: none; padding-right: 6px; display: flex; flex-direction: column; border-right: 1px solid #c0c0c0; }
.pane { display: flex; flex-direction: column; }
.nav-pane { flex: 1; border-top: 1px solid #ccc; min-height: 0; margin-bottom: 7px; border-bottom: 1px solid #c4c4c4; }
.phead { display: flex; align-items: center; height: 39px; flex: none; background: #e6e6e6; }
.phead h2 { font-size: 20px; line-height: 26px; }
.left .phead h2 { margin-left: -3px; }
.wc { margin-left: auto; display: flex; gap: 9px; padding-right: 5px; }
.tools { display: flex; align-items: center; height: 28px; flex: none; background: #f0f0f0; font-size: 11px; }
.tools button { width: 22px; height: 20px; display: flex; align-items: center; justify-content: center; flex: none; }
.view-tools { height: 27px; padding-bottom: 2px; }
.tools .thin { width: 12px; }
.tools .gap { margin-left: 9px; }
.tools .next { margin-left: 3px; }
.tools button.on, .dock .on { background: #cdcdcd; }
.tools .txt { width: auto; padding: 0 4px; }
.vsep { width: 1px; height: 20px; background: #d5d5d5; margin: 0 5px; }
.sel-view { width: 66px; height: 21px; margin: 0 2px 0 4px; }
.tree { background: #fff; border-top: 1px solid #d0d0d0; border-bottom: 1px solid #d0d0d0; font: 11px/17px Roboto, "Liberation Sans", sans-serif; }
.tree-view { height: 339px; padding-top: 2px; overflow: hidden; position: relative; }
.tree-view::after { content: ""; position: absolute; right: 3px; top: 18px; width: 2px; height: 205px; background: #999; }
.tree li { height: 17px; display: flex; align-items: center; white-space: nowrap; background-repeat: no-repeat; }
.tree-nav { flex: 1; display: flex; flex-direction: column; padding: 2px 0 6px; min-height: 0; border-bottom: 0; }
.tree-nav li { flex: 1; height: auto; min-height: 0; }
.tree .off { color: #a5a5a5; }
.tree .dark { color: #111; }
.tree label, .tree span { display: flex; align-items: center; gap: 3px; flex: 1; }
.tree .hit { background: #f0f0f0; margin-right: 3px; }
.tree input { appearance: none; width: 11px; height: 11px; border: 1px solid #999; margin: 0 3px 0 0; background: #fff; }
.tree input:checked { background: #fff url("data:image/svg+xml,%3Csvg xmlns='http://www.w3.org/2000/svg' width='9' height='9'%3E%3Cpath d='M1.500 4.500l2 2.500 4-5.500' fill='none' stroke='%23666' stroke-width='1.500'/%3E%3C/svg%3E"); }
.tree .off input { opacity: .5; }
.tw { width: 15px; height: 10px; flex: none; }
.tw svg { width: 8px; height: 10px; }
.d1, .d2, .d3 { background-image: linear-gradient(#d4d4d4, #d4d4d4), linear-gradient(#d4d4d4, #d4d4d4), linear-gradient(#d4d4d4, #d4d4d4), linear-gradient(#d4d4d4, #d4d4d4); }
.d1 { padding-left: 17px; background-size: 1px 100%, 9px 1px, 0 0, 0 0; background-position: 20px 0, 20px 50%, 0 0, 0 0; }
.d2 { padding-left: 34px; background-size: 1px 100%, 9px 1px, 1px 100%, 0 0; background-position: 20px 0, 37px 50%, 37px 0, 0 0; }
.d3 { padding-left: 51px; background-size: 1px 100%, 9px 1px, 1px 100%, 1px 100%; background-position: 20px 0, 54px 50%, 54px 0, 37px 0; }
.d2.end { background-size: 1px 100%, 9px 1px, 1px 50%, 0 0; }
.d3.end { background-size: 1px 100%, 9px 1px, 1px 50%, 1px 100%; }
.sel-tools { padding-left: 1px; height: 28px; }
.ptabs { display: flex; height: 24px; margin-bottom: 3px; border-top: 1px solid #ccc; border-bottom: 1px solid #ccc; font-size: 11px; }
.ptabs button { display: flex; align-items: center; gap: 4px; padding: 0 6px; height: 21px; }
.ptabs .active { background: #fff; border: 1px solid #bbb; border-top: 0; border-left: 0; padding: 0 5px 0 0; }
.ptabs .cut { margin-left: -4px; }
.nav-pane .phead { height: 40px; }
.nav-tools { height: 25px; gap: 2px; padding-left: 2px; padding-bottom: 2px; }

/* centre */
.center { flex: 1; min-width: 0; display: flex; flex-direction: column; padding-right: 1px; }
.strip { height: 31px; flex: none; background: #f0f0f0; display: flex; justify-content: space-between; font-size: 11px; line-height: 17px; color: #666; border-bottom: 2px solid #aaa; }
.spin { width: 16px; background: #fafafa; padding: 2px 3px; }
.spin svg { width: 10px; height: 24px; }
.viewport { position: relative; flex: 1; min-height: 0; background: #fff; border: 1px solid #666; border-top-width: 2px; border-bottom: 1px solid #ccc; }
#model { width: 100%; height: 100%; }
.gizmo { position: absolute; right: 6px; top: 4px; width: 60px; height: 44px; font: 12px "Liberation Sans", sans-serif; }
.work { position: relative; flex: none; height: 268px; display: flex; flex-direction: column; }
.work .phead { height: 47px; padding-top: 6px; }
.work .phead h2 { margin-left: 4px; font-size: 21px; }
.work-tools { height: 23px; padding-left: 9px; gap: 2px; }
.sheet { flex: 1; border: 1px solid #666; border-bottom-width: 2px; background: #f0f0f0; }
.sheet table { border-collapse: collapse; table-layout: fixed; width: 785px; margin: 0; color: #222; font-size: 11px; }
.sheet th, .sheet td { border: 1px solid #666; padding: 0 1px; text-align: center; font-weight: 400; white-space: nowrap; overflow: hidden; line-height: 15px; }
.sheet thead th, .sheet tbody th { border-color: #111; }
.sheet td { background: #fff; height: 20px; }
.sheet .h1 { height: 25px; } .sheet .h3 { height: 35px; }
.sheet .l { text-align: left; padding-left: 2px; } .sheet .dim { color: #888; } .sheet .new { color: #888; font-style: italic; font-size: 12px; } .sheet .num { text-align: right; }
.sheet td button { width: 100%; height: 17px; border: 1px solid #bbb; border-radius: 3px; background: #fff; line-height: 10px; color: #222; display: block; }
.c30 { width: 30px; } .c24 { width: 24px; } .c120 { width: 120px; } .c80 { width: 80px; } .c100 { width: 100px; } .c70 { width: 70px; } .c50 { width: 50px; }
.mark { position: absolute; left: 0; top: 1px; width: 798px; height: 206px; border: 4px solid #d01010; }
.wtabs { height: 25px; flex: none; display: flex; padding-left: 3px; font-size: 11px; border-bottom: 1px solid #ccc; }
.wtabs button { display: flex; align-items: center; gap: 4px; padding: 0 6px 0 2px; height: 22px; }
.wtabs .active { background: #fff; border: 1px solid #aaa; border-top: 0; padding: 0 7px 0 4px; margin: 0 4px 0 0; }

/* analysis */
.right { width: 438px; flex: none; display: flex; flex-direction: column; border-left: 1px solid #b5b5b5; padding-left: 7px; }
.right .phead { height: 43px; align-items: flex-end; padding-bottom: 6px; position: relative; }
.right .phead h2 { margin-left: 3px; }
.fold { position: absolute; right: 4px; top: 6px; }
.an-tools { padding-left: 13px; }
.an-tools label { font: 11px Roboto, sans-serif; display: flex; align-items: center; gap: 8px; }
.an-tools select { width: 96px; height: 21px; margin-right: 2px; }
.tight { margin: 0 4px 0 3px; }
.chart { background: #fff; height: 294px; flex: none; border-top: 1px solid #ddd; }
#chart { width: 100%; height: 100%; }
#chart text { font-family: Lato, "Noto Sans", sans-serif; fill: #111; }
.props { flex: 1; min-height: 0; margin-top: 5px; background: #f0f0f0; position: relative; }
.props::after { content: ""; position: absolute; right: 0; top: 37px; width: 2px; height: 180px; background: #999; }
.props table { border-collapse: collapse; table-layout: fixed; width: 100%; font: 11px/16px Roboto, "Liberation Sans", sans-serif; border-bottom: 5px solid #fff; }
.c17 { width: 17px; } .c156 { width: 156px; } .c16 { width: 16px; }
.props th, .props td { padding: 0 3px; text-align: left; font-weight: 400; overflow: hidden; white-space: nowrap; height: 17px; }
.props thead th { background: #f0f0f0; border: 1px solid #bbb; height: 21px; }
.props td { background: #fff; border-bottom: 1px solid #e8e8e8; border-right: 1px solid #eee; }
.props td:first-child:not(.first) { background: #f0f0f0; padding: 0 0 0 8px; border: 0; }
.props td:last-child { border: 0; }
.props .cat td:first-child, .props .cat th { background: #eee; }
.props .cat th { font-weight: 700; font-size: 13px; }
.props .sub td:nth-child(2) { padding-left: 15px; }
.props td svg { width: 8px; height: 10px; }
.grip { height: 8px; flex: none; background: #cdcdcd; display: flex; justify-content: center; align-items: center; }
.grip::before { content: ""; width: 60px; height: 3px; background: repeating-linear-gradient(90deg, #999 0 3px, #eee 3px 6px); }
.dock { height: 31px; flex: none; display: flex; justify-content: flex-end; background: #f0f0f0; border-bottom: 1px solid #ccc; }
.dock button { width: 26px; display: flex; align-items: center; justify-content: center; }
.dock .on { width: 24px; margin: 0 1px; }

/* status bar */
footer { height: 23px; flex: none; display: flex; align-items: center; background: #f0f0f0; font-size: 11px; white-space: pre; }
footer a { color: inherit; text-decoration: none; width: 448px; padding-left: 2px; font-size: 11px; }
.st-mid { display: flex; align-items: center; }
.st-list { margin: 0 14px 0 7px; }
.st-a { width: 457px; }
.st-lock { margin-left: 30px; }
.st-right { margin-left: auto; display: flex; align-items: center; font-size: 12px; gap: 3px; }
.st-right button { height: 20px; }
.st-right .on { border: 1px solid #2b579a; background: #cdd0d6; padding: 0 3px; }
.perp { margin-left: 8px; margin-right: 10px; }
.pm { font-size: 14px; color: #888; }
input[type=range] { appearance: none; width: 88px; height: 14px; margin: 0 4px; background: linear-gradient(#aaa, #aaa) center/100% 1px no-repeat; }
input[type=range]::-webkit-slider-thumb { appearance: none; width: 5px; height: 13px; background: #777; }
```
FILE: app.js
```js
// Structural model: columns, beams, footings and stairs in parallel projection.
const ORIGIN = [607, 277];
const SPAN_U = [373, -97], SPAN_V = [239, 115];
const DIR_U = [0.968, -0.252], DIR_V = [0.901, 0.434];
const VS = [0, 0.327, 0.645, 1];
const ROWS = [[0, 0.336, 0.646, 1], [0, 0.354, 0.674, 1.019], [0, 0.338, 0.654, 1.013], [0, 0.341, 0.65, 1]];
const LEVELS = [0, 112, 224], BASE = 337;
const COLORS = { column: "rgb(0,128,0)", beam: "rgb(0,64,255)", tie: "rgb(0,100,125)", footing: "rgb(84,0,128)" };
const parts = [];

function at(u, v, z) {
  return [ORIGIN[0] + u * SPAN_U[0] + v * SPAN_V[0], ORIGIN[1] + u * SPAN_U[1] + v * SPAN_V[1] + z];
}
function path(points, closed) {
  return "M" + points.map(p => p[0].toFixed(1) + " " + p[1].toFixed(1)).join("L") + (closed ? "Z" : "");
}
function box(kind, p, a, b, height, depth, extra) {
  const q = [p[0] + a[0], p[1] + a[1]], r = [q[0] + b[0], q[1] + b[1]], s = [p[0] + b[0], p[1] + b[1]];
  const low = t => [t[0], t[1] + height];
  const hull = path([p, q, r, low(r), low(s), low(p)], true);
  const edges = path([p, q, r, s], true) + path([low(p), low(q), low(r), low(s)], true) +
    [p, q, r, s].map(t => path([t, low(t)])).join("") + (extra || "");
  parts.push({ depth, svg: `<path d="${hull}" fill="${COLORS[kind]}" fill-opacity=".62"/><path d="${edges}" fill="none" stroke="#001c30" stroke-opacity=".6" stroke-width=".8"/>` });
}
const along = (dir, len) => [dir[0] * len, dir[1] * len];
const depthOf = (u, v) => 115 * v - 97 * u;

function beamU(kind, u0, u1, v, z, h) {
  const [x, y] = at(u0, v, z), len = (u1 - u0) * 385 - 13;
  box(kind, [x + DIR_U[0] * 6, y + DIR_U[1] * 6 - 1], along(DIR_U, len), along(DIR_V, 5), h, depthOf((u0 + u1) / 2, v));
}
function beamV(kind, u0, v0, u1, v1, z, h) {
  const [x0, y0] = at(u0, v0, z), [x1, y1] = at(u1, v1, z);
  const len = Math.hypot(x1 - x0, y1 - y0), dir = [(x1 - x0) / len, (y1 - y0) / len];
  box(kind, [x0 - 1 + dir[0] * 4, y0 + dir[1] * 4], along(DIR_U, 5), along(dir, len - 8), h, depthOf((u0 + u1) / 2, (v0 + v1) / 2));
}
function column(u, v) {
  const [x, y] = at(u, v, 0);
  [[0, 112], [112, 112], [224, 113]].forEach(([z, h]) =>
    box("column", [x - 10.5, y + z - 1], along(DIR_U, 12), along(DIR_V, 10), h, depthOf(u, v) + 0.1));
}
function footing(u, v, lenU, lenV, h) {
  const [x, y] = at(u, v, BASE - 2);
  const hu = along(DIR_U, lenU / 2), hv = along(DIR_V, lenV / 2);
  const rays = [[-1, -1], [1, -1], [1, 1], [-1, 1]].map(([i, j]) => path([[x, y - 1], [x + i * hu[0] + j * hv[0], y + i * hu[1] + j * hv[1]]])).join("");
  box("footing", [x - hu[0] - hv[0], y - hu[1] - hv[1]], along(DIR_U, lenU), along(DIR_V, lenV), h, depthOf(u, v) - 20, rays);
}

VS.forEach((v, j) => {
  const us = ROWS[j];
  us.forEach((u, i) => {
    column(u, v);
    const wide = j === 3 && i > 0;
    if (!(j === 3 && i === 2)) footing(u, v, wide ? 57 : i === 3 ? 50 : 44, wide ? 42 : 36, wide ? 20 : 17);
    if (i < 3) {
      const stops = j === 3 && i === 2 ? [u, 0.8, us[3]] : [u, us[i + 1]];
      for (let k = 1; k < stops.length; k++) LEVELS.forEach(z => beamU("beam", stops[k - 1], stops[k], v, z, 23));
      beamU("tie", u, us[i + 1], v, BASE - 6, 22);
    }
    if (j < 3) {
      const next = ROWS[j + 1][i];
      if (i === 0 || i === 3) LEVELS.forEach(z => beamV("beam", u, v, next, VS[j + 1], z, 23));
      beamV("tie", u, v, next, VS[j + 1], BASE - 6, 22);
    }
  });
});
column(0.8, 1);
footing(0.72, 1, 107, 30, 20);
LEVELS.forEach(z => beamV("beam", 0.81, 0.645, 0.81, 1, z, 22));

// One stair flight with its landing, repeated on every storey.
LEVELS.forEach(z => {
  const sh = pts => pts.map(([x, y]) => [x, y + z]);
  const flight = sh([[1072, 275], [1104, 268], [1107, 276], [1107, 285], [1119, 290], [1119, 300], [1130, 310], [1138, 324], [1140, 346], [1127, 362], [1110, 330], [1097, 324]]);
  const landing = sh([[1104, 369], [1129, 358], [1136, 343], [1157, 345], [1160, 350], [1191, 340], [1221, 353], [1221, 360], [1104, 380]]);
  const deep = sh([[1133, 368], [1160, 350], [1191, 340], [1201, 345]]);
  const front = sh([[1104, 369], [1150, 360], [1221, 353], [1221, 360], [1104, 380]]);
  let steps = "";
  for (let k = 0; k < 12; k++) steps += path(sh([[1078 + k * 4, 279 + k * 6.500], [1106 + k * 3, 274 + k * 6]]));
  for (let k = 0; k < 6; k++) steps += path(sh([[1084 + k * 9, 274 + k * 6], [1084 + k * 9, 290 + k * 10]]));
  for (let k = 0; k < 9; k++) steps += path(sh([[1134 + k * 7, 357 - k * 1.500], [1148 + k * 7, 364 - k * 1.500]]));
  parts.push({ depth: 22, svg: `<g fill="#990000" stroke="#300" stroke-opacity=".6" stroke-width=".8"><path d="${path(flight, true)}" fill-opacity=".62"/><path d="${path(landing, true)}" fill-opacity=".62"/><path d="${path(front, true)}" fill-opacity=".55"/><path d="${path(deep, true)}" fill-opacity=".75"/><path d="${steps}" fill="none"/></g>` });
});
parts.sort((a, b) => a.depth - b.depth);
document.getElementById("model").innerHTML = parts.map(p => p.svg).join("");

// Response spectra chart.
const X = t => 1544 + t * 79.85, Y = s => 428 - s * 28.67;
const range = (a, b, f) => { const out = []; for (let k = 0; k <= 40; k++) { const t = a + (b - a) * k / 40; out.push([X(t), Y(f(t))]); } return out; };
const pt = (t, s) => [X(t), Y(s)];
const sd = [pt(0, 1.9), pt(0.15, 2.35), ...range(0.5, 2.5, t => 1.175 / t), pt(4, 0.47)];
const svd = [pt(0, 1.4), pt(0.05, 3.53), ...range(0.15, 1, t => 0.5295 / t), pt(1.12, 0.42), pt(4, 0.42)];
let c = "";
for (let k = 1; k <= 17; k++) c += `<path d="M${X(k / 4)} 227V428" stroke="${k % 2 ? "#e4e4e4" : "#ccc"}"/>`;
for (let k = 1; k <= 7; k++) c += `<path d="M1544 ${Y(k)}H1896" stroke="#ccc"/>`;
const area = (line, fill, stroke) => `<path d="${path([pt(0, 0), ...line, pt(4, 0)], true)}" fill="${fill}"/><path d="${path(line)}" fill="none" stroke="${stroke}" stroke-width="1.6"/>`;
c += area(sd, "rgba(90,125,255,.35)", "#3a55c0") + area(svd, "rgba(225,70,90,.3)", "#b8404c");
c += `<path d="${path([pt(0, 2.68), pt(0.15, 6.7)])}${path(range(0.5, 1, t => 3.35 / t))}" fill="none" stroke="#4c5c30" stroke-width="1.6" stroke-dasharray="6 2"/>`;
c += `<path d="${path([pt(0.15, 6.7), pt(0.5, 6.7)])}${path([...range(1, 2.5, t => 3.35 / t), ...range(2.5, 4, t => 8.375 / t / t)])}" fill="none" stroke="#4c5c30" stroke-width="1.6"/>`;
c += `<path d="M1544.5 227V428.500H1896" fill="none" stroke="#222"/>`;
for (let k = 0; k <= 35; k++) c += `<path d="M${k % 5 ? 1541 : 1538} ${Y(k / 5)}H1544" stroke="#222"/>`;
for (let k = 0; k <= 17; k++) c += `<path d="M${X(k / 4)} 428V${k % 2 ? 432 : 435}" stroke="#222"/>`;
for (let k = 0; k <= 7; k++) c += `<text x="1534" y="${Y(k) + 4}" text-anchor="end" font-size="12">${k}</text>`;
for (let k = 0; k <= 8; k++) c += `<text x="${X(k / 2)}" y="450" text-anchor="middle" font-size="12">${k / 2}</text>`;
c += `<text x="1720" y="484" text-anchor="middle" font-size="19">T(sec)</text><text transform="translate(1513 328) rotate(-90)" text-anchor="middle" font-size="19">Sd(m/s²)</text>`;
c += `<rect x="1729.500" y="223.500" width="173" height="71" fill="#fff" fill-opacity=".88" stroke="#ccc"/>`;
c += `<rect x="1739" y="235" width="29" height="10" fill="#bccbff" stroke="#3a5cc8" stroke-width="1.500"/><rect x="1739" y="254" width="29" height="10" fill="#f8c4c8" stroke="#b8404c" stroke-width="1.500"/><path d="M1739 277.500h29" stroke="#4c5c30" stroke-width="1.600" stroke-dasharray="5 1.500"/>`;
c += `<text x="1772" y="244" font-size="11">Sd(T)x,y</text><text x="1772" y="263" font-size="11">Svd</text><text x="1772" y="282" font-size="11">Se(T)x,y - TR=475 χρόνια</text>`;
document.getElementById("chart").innerHTML = c;
```
